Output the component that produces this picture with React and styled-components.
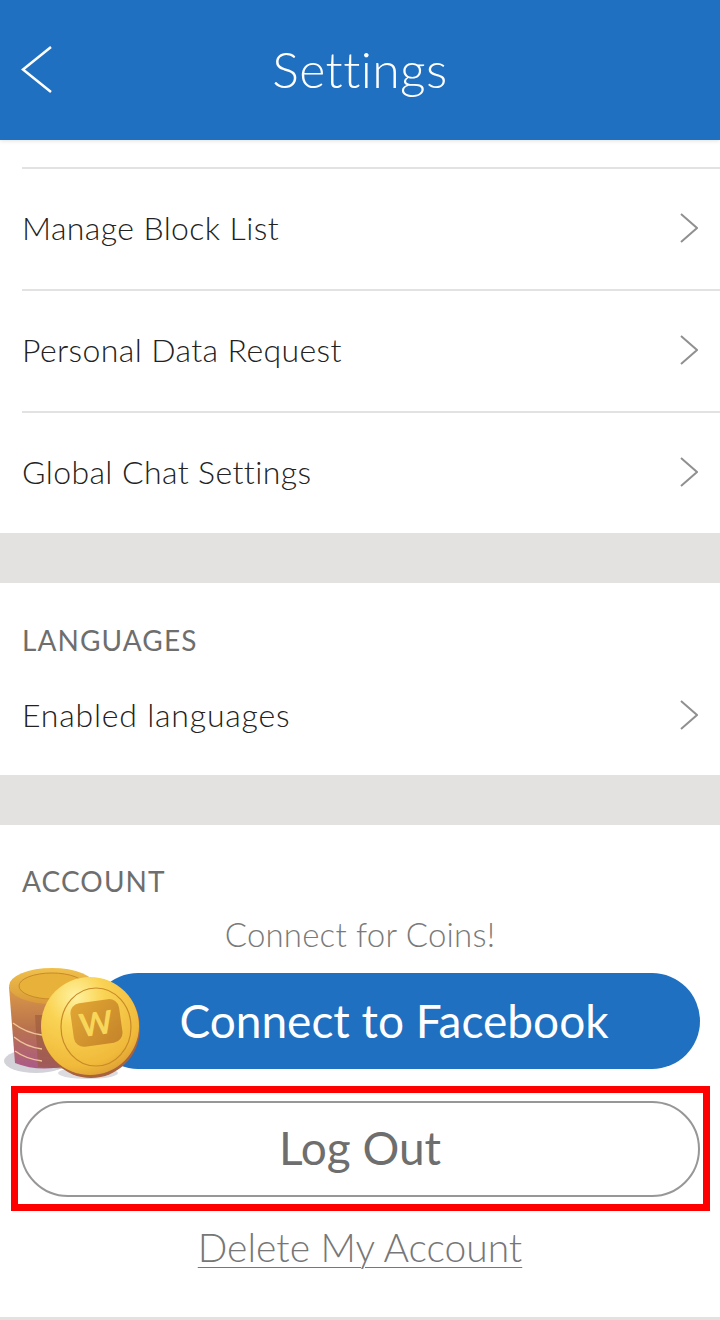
import React from "react";
import styled, { createGlobalStyle } from "styled-components";

const GlobalStyle = createGlobalStyle`
  html, body {
    margin: 0;
    padding: 0;
    background: #fff;
  }
  * {
    box-sizing: border-box;
  }
`;

const Page = styled.div`
  width: 720px;
  height: 1320px;
  overflow: hidden;
  background: #fff;
  font-family: Lato, "Open Sans", sans-serif;
  font-weight: 300;
  display: flex;
  flex-direction: column;
`;

const Header = styled.header`
  height: 140px;
  flex: none;
  background: #1f70c1;
  display: flex;
  align-items: center;
  justify-content: center;
  padding-bottom: 3px;
  position: relative;
  box-shadow: 0 1px 4px rgba(0, 0, 0, 0.12);
`;

const BackButton = styled.svg`
  position: absolute;
  left: 21px;
  top: 46px;
`;

const Title = styled.h1`
  margin: 0;
  color: #fff;
  font-size: 50px;
  font-weight: 300;
  line-height: 60px;
  letter-spacing: 0.4px;
`;

const Section = styled.section`
  padding-left: 22px;
  padding-top: ${(p) => p.$top || 0}px;
`;

const Row = styled.div`
  height: ${(p) => p.$height || 122}px;
  display: flex;
  align-items: center;
  justify-content: space-between;
  padding: 0 22px 4px 0;
  border-top: ${(p) => (p.$noLine ? "none" : "2px solid #e3e2e1")};
  color: #222;
  font-size: 32px;
  letter-spacing: ${(p) => p.$spacing || 0.4}px;
`;

const ChevronIcon = styled.svg`
  margin-top: 2px;
`;

const Gap = styled.div`
  height: 50px;
  flex: none;
  background: #e4e2e1;
`;

const SectionLabel = styled.div`
  color: #6e6e6e;
  font-size: 28px;
  font-weight: 400;
  line-height: 34px;
  letter-spacing: 1.1px;
`;

const Hint = styled.p`
  margin: 16px 0 0;
  text-align: center;
  color: #7a7a7a;
  font-size: 33px;
  line-height: 40px;
  letter-spacing: 0.2px;
`;

const AccountBody = styled.div`
  display: flex;
  flex-direction: column;
  align-items: center;
`;

const FacebookWrap = styled.div`
  position: relative;
  width: 720px;
  height: 96px;
  margin-top: 19px;
  padding: 0 20px 0 90px;
`;

const FacebookButton = styled.div`
  height: 96px;
  border-radius: 48px;
  background: #1f70c1;
  color: #fff;
  font-size: 46px;
  font-weight: 400;
  display: flex;
  align-items: center;
  justify-content: center;
  padding: 0 2px 2px 0;
`;

const Coins = styled.svg`
  position: absolute;
  left: 0;
  top: -8px;
`;

const Highlight = styled.div`
  width: 699px;
  height: 125px;
  margin: 17px 0 0 11px;
  align-self: flex-start;
  border: 7px solid #ff0000;
  padding: 8px 3px 8px 2px;
`;

const LogOutButton = styled.div`
  height: 96px;
  border: 2px solid #979797;
  border-radius: 48px;
  color: #6e6e6e;
  font-size: 46px;
  font-weight: 400;
  display: flex;
  align-items: center;
  justify-content: center;
  padding-bottom: 4px;
`;

const DeleteLink = styled.a`
  margin-top: 14px;
  color: #777;
  font-size: 39px;
  line-height: 44px;
  text-decoration: underline;
  text-decoration-thickness: 1px;
  text-underline-offset: 5px;
`;

const BottomBar = styled.div`
  margin-top: auto;
  height: 3px;
  flex: none;
  background: #e4e2e1;
`;

const Chevron = () => (
  <ChevronIcon width="18" height="30" viewBox="0 0 18 30" fill="none">
    <path d="M1 1 L17 15 L1 29" stroke="#909090" strokeWidth="2" />
  </ChevronIcon>
);

const CoinStack = () => (
  <Coins width="144" height="116" viewBox="0 0 144 116">
    <defs>
      <linearGradient id="stack" x1="0" y1="0" x2="0" y2="1">
        <stop offset="0" stopColor="#dc9a48" />
        <stop offset="0.5" stopColor="#b9734c" />
        <stop offset="1" stopColor="#ab5a88" />
      </linearGradient>
      <linearGradient id="top" x1="0" y1="0" x2="0" y2="1">
        <stop offset="0" stopColor="#f0c04c" />
        <stop offset="1" stopColor="#d99a3a" />
      </linearGradient>
      <radialGradient id="face" cx="0.35" cy="0.2" r="0.95">
        <stop offset="0" stopColor="#fff2a0" />
        <stop offset="0.3" stopColor="#fad455" />
        <stop offset="0.75" stopColor="#f0b93a" />
        <stop offset="1" stopColor="#cf8f30" />
      </radialGradient>
      <linearGradient id="badge" x1="0" y1="0" x2="1" y2="1">
        <stop offset="0" stopColor="#e2a733" />
        <stop offset="1" stopColor="#c4832a" />
      </linearGradient>
    </defs>
    <ellipse cx="36" cy="96" rx="32" ry="12" fill="#d2d2d8" />
    <ellipse cx="88" cy="108" rx="30" ry="6" fill="#dcdce0" />
    <path d="M9 22 H70 V100 Q40 108 15 98 Z" fill="url(#stack)" />
    <path d="M35 50 H70 V104 L38 102 Z" fill="#9a5a3c" opacity="0.6" />
    <path d="M13 58 Q26 68 42 70 M14 72 Q26 82 42 84 M15 86 Q26 94 42 96" stroke="#f0c39a" strokeWidth="1.5" fill="none" />
    <ellipse cx="52" cy="21" rx="43" ry="18" fill="url(#top)" />
    <ellipse cx="52" cy="21" rx="33" ry="13" fill="#e8b23a" stroke="#c98a28" strokeWidth="1" />
    <ellipse cx="91" cy="63" rx="49" ry="50" fill="#a8623e" />
    <ellipse cx="90" cy="61" rx="49" ry="49" fill="url(#face)" />
    <ellipse cx="96" cy="62" rx="35" ry="39" fill="none" stroke="#c98a28" strokeWidth="1.2" />
    <rect x="72" y="36" width="49" height="44" rx="10" fill="url(#badge)" transform="rotate(-8 96 58)" />
    <text x="96" y="70" textAnchor="middle" fontFamily="Lato, sans-serif" fontSize="32" fontWeight="700" fill="#f7d65a" transform="rotate(-8 96 58)">W</text>
  </Coins>
);

const App = () => {
  return (
    <Page>
      <GlobalStyle />
      <Header>
        <BackButton width="32" height="48" viewBox="0 0 32 48" fill="none">
          <path d="M30 1 L2 23.500 L30 46" stroke="#fff" strokeWidth="2.500" />
        </BackButton>
        <Title>Settings</Title>
      </Header>
      <Section $top={27}>
        <Row>
          Manage Block List
          <Chevron />
        </Row>
        <Row>
          Personal Data Request
          <Chevron />
        </Row>
        <Row>
          Global Chat Settings
          <Chevron />
        </Row>
      </Section>
      <Gap />
      <Section $top={40}>
        <SectionLabel>LANGUAGES</SectionLabel>
        <Row $noLine $height={118} $spacing={0.8}>
          Enabled languages
          <Chevron />
        </Row>
      </Section>
      <Gap />
      <Section $top={39}>
        <SectionLabel>ACCOUNT</SectionLabel>
      </Section>
      <AccountBody>
        <Hint>Connect for Coins!</Hint>
        <FacebookWrap>
          <FacebookButton>Connect to Facebook</FacebookButton>
          <CoinStack />
        </FacebookWrap>
        <Highlight>
          <LogOutButton>Log Out</LogOutButton>
        </Highlight>
        <DeleteLink>Delete My Account</DeleteLink>
      </AccountBody>
      <BottomBar />
    </Page>
  );
};

export default App;
